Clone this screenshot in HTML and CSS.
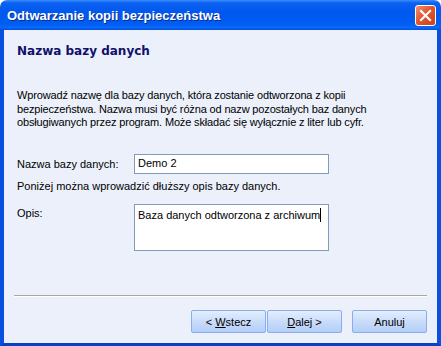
FILE: index.html
```html
<!DOCTYPE html>
<html lang="pl">
<head>
  <meta charset="UTF-8">
  <title>Odtwarzanie kopii bezpieczeństwa</title>
  <link rel="stylesheet" href="styles.css">
</head>
<body>
  <div class="window">
    <div class="titlebar">
      <span class="title">Odtwarzanie kopii bezpieczeństwa</span>
      <button class="close">
        <svg width="13" height="13" viewBox="0 0 13 13">
          <path d="M2 2 L11 11 M11 2 L2 11" stroke="#fff" stroke-width="2.2" stroke-linecap="square"/>
        </svg>
      </button>
    </div>
    <div class="content">
      <h1 class="heading">Nazwa bazy danych</h1>
      <p class="intro">Wprowadź nazwę dla bazy danych, która zostanie odtworzona z kopii<br>bezpieczeństwa. Nazwa musi być różna od nazw pozostałych baz danych<br>obsługiwanych przez program. Może składać się wyłącznie z liter lub cyfr.</p>
      <div class="row row--name">
        <label class="label">Nazwa bazy danych:</label>
        <div class="field">Demo 2</div>
      </div>
      <p class="hint">Poniżej można wprowadzić dłuższy opis bazy danych.</p>
      <div class="row row--desc">
        <label class="label">Opis:</label>
        <div class="field field--area">Baza danych odtworzona z archiwum<span class="caret"></span></div>
      </div>
      <div class="spacer"></div>
      <div class="separator"></div>
      <div class="buttons">
        <button class="btn">&lt; <u>W</u>stecz</button>
        <button class="btn"><u>D</u>alej &gt;</button>
        <button class="btn btn--cancel">Anuluj</button>
      </div>
    </div>
  </div>
</body>
</html>
```

FILE: styles.css
```css
html, body {
  margin: 0;
  padding: 0;
  background: #fff;
}
.window {
  width: 441px;
  height: 346px;
  display: flex;
  flex-direction: column;
  font-family: "Liberation Sans", Arial, sans-serif;
  font-size: 11px;
  color: #000;
  box-sizing: border-box;
}
.titlebar {
  height: 30px;
  flex: none;
  display: flex;
  align-items: center;
  justify-content: space-between;
  padding: 0 5px 0 7px;
  border-radius: 7px 7px 0 0;
  background: linear-gradient(#3a8cff 0%, #0b61f0 10%, #0058ee 40%, #005df2 80%, #0866f8 92%, #0050dc 100%);
}
.title {
  color: #fff;
  font-family: "Liberation Sans", Arial, sans-serif;
  font-weight: bold;
  font-size: 13px;
  text-shadow: 1px 1px 0 #0a2a8a;
  margin-top: 1px;
}
.close {
  width: 21px;
  height: 21px;
  padding: 0;
  border: 1px solid #fff;
  border-radius: 3px;
  background: linear-gradient(135deg, #f29070 0%, #e2562d 45%, #c8411b 100%);
  display: flex;
  align-items: center;
  justify-content: center;
  margin-top: 1px;
}
.content {
  flex: 1;
  display: flex;
  flex-direction: column;
  background: #ebf0fa;
  border-left: 4px solid #0a50e0;
  border-right: 4px solid #0a50e0;
  border-bottom: 3px solid #0a3fc8;
  padding: 0 10px 10px 13px;
}
.heading {
  margin: 14px 0 0 0;
  font-family: "DejaVu Sans", Verdana, sans-serif;
  font-size: 12px;
  font-weight: bold;
  line-height: 14px;
  color: #10106b;
}
.intro {
  margin: 31px 0 0 0;
  line-height: 13.5px;
  white-space: nowrap;
  letter-spacing: -0.15px;
}
.row {
  display: flex;
  align-items: flex-start;
}
.row--name {
  margin-top: 24px;
  align-items: center;
}
.row--desc {
  margin-top: 11px;
}
.label {
  width: 117px;
  flex: none;
}
.row--desc .label {
  margin-top: 3px;
}
.field {
  width: 195px;
  height: 20px;
  box-sizing: border-box;
  border: 1px solid #7f9db9;
  background: #fff;
  padding: 1px 3px;
  line-height: 14px;
}
.field--area {
  height: 47px;
  padding-top: 3px;
}
.caret {
  display: inline-block;
  width: 1px;
  height: 14px;
  background: #000;
  vertical-align: -3px;
}
.hint {
  margin: 5px 0 0 0;
  line-height: 14px;
}
.spacer {
  flex: 1;
}
.separator {
  height: 1px;
  background: #aca899;
  border-bottom: 1px solid #fff;
  margin-left: -3px;
}
.buttons {
  display: flex;
  justify-content: flex-end;
  margin-top: 13px;
}
.btn {
  width: 75px;
  height: 23px;
  margin-left: 1px;
  padding: 0;
  font-family: "Liberation Sans", Arial, sans-serif;
  font-size: 11px;
  color: #000;
  border: 1px solid #86aef0;
  border-radius: 2px;
  background: linear-gradient(#e4eefd 0%, #c9dcfa 50%, #b5cff7 100%);
}
.btn--cancel {
  margin-left: 10px;
}
```
